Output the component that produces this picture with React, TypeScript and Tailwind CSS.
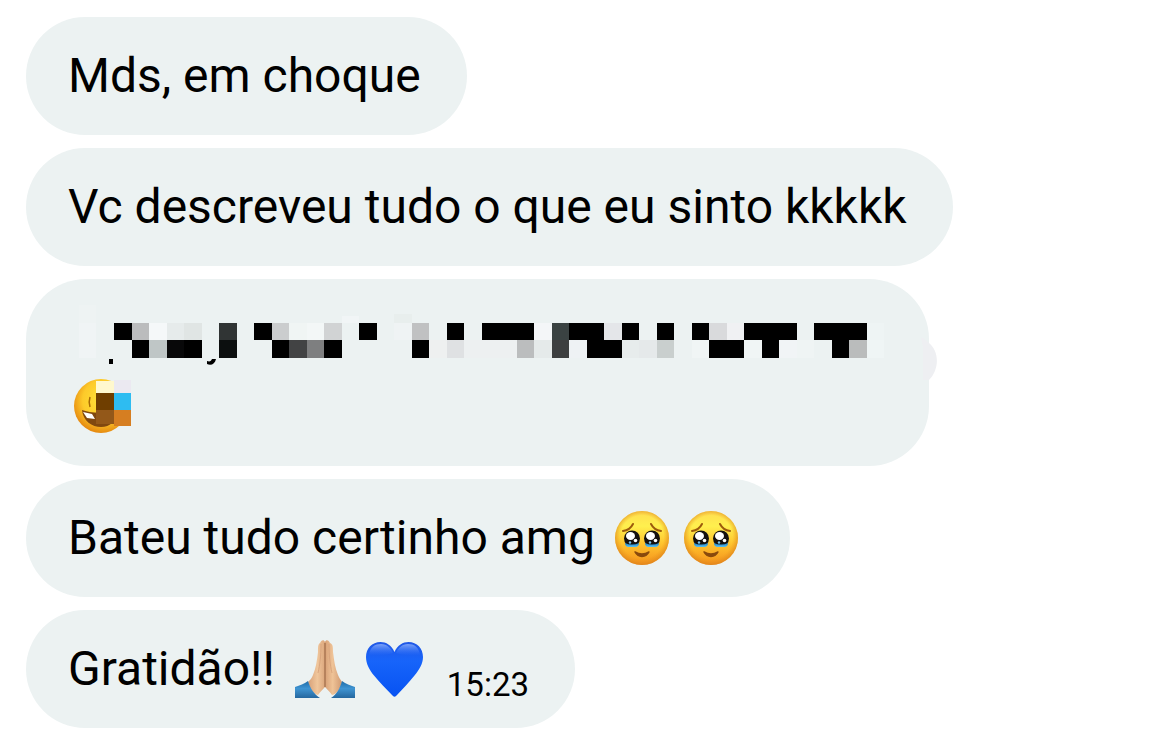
import type { ReactNode } from 'react';

interface BubbleProps {
    children: ReactNode;
    className?: string;
}

// [column, span, colour] for each row of censor blocks
type Block = [number, number, string];

const TOP_ROW: Block[] = [
    [2, 1, '#000'], [3, 1, '#bbbcbd'], [4, 1, '#f5f8f9'], [5, 1, '#e6ebeb'], [6, 1, '#e0e5e4'],
    [8, 1, '#303434'], [10, 1, '#000'], [11, 1, '#cbcdce'], [12, 1, '#f0f5f4'], [13, 1, '#f3f7f7'],
    [14, 1, '#d1d3d4'], [16, 1, '#000'], [18, 1, '#eff3f4'], [19, 1, '#c0c1c2'], [21, 1, '#000'],
    [23, 3, '#000'], [26, 1, '#f4f6f8'], [27, 1, '#3a4242'], [28, 2, '#000'], [30, 1, '#e4e6e9'],
    [31, 1, '#000'], [33, 1, '#000'], [35, 1, '#000'], [36, 1, '#d9dadc'], [37, 1, '#f0f1f3'],
    [38, 3, '#000'], [42, 3, '#000'], [45, 1, '#eef4f4'],
];

const BOTTOM_ROW: Block[] = [
    [3, 1, '#000'], [4, 1, '#bfc6c6'], [5, 1, '#080809'], [6, 1, '#000'], [8, 1, '#0c0f0f'],
    [11, 1, '#000'], [12, 1, '#424344'], [13, 1, '#7e7f80'], [14, 1, '#000'], [19, 1, '#000'],
    [20, 1, '#eef0f0'], [21, 1, '#dfe1e3'], [22, 3, '#edf0f1'], [25, 1, '#bbbdbe'], [26, 1, '#e5eaea'],
    [27, 1, '#3d3f40'], [28, 1, '#eef2f4'], [29, 2, '#000'], [31, 1, '#e7ecec'], [32, 1, '#e5e9ea'],
    [33, 1, '#c9cfce'], [35, 1, '#f0f5f5'], [36, 2, '#000'], [38, 1, '#f0f5f5'], [39, 1, '#000'],
    [40, 1, '#f1f4f6'], [41, 1, '#eff4f4'], [43, 1, '#000'], [44, 1, '#babcbc'], [45, 1, '#eff5f5'],
];

function Bubble({ children, className = '' }: BubbleProps) {
    return (
        <li className={`relative w-fit rounded-[60px] bg-[#ecf2f2] py-6 pl-[42px] ${className}`}>
            {children}
        </li>
    );
}

function CensoredLine() {
    const drawRow = (row: Block[], y: number, height: number) =>
        row.map(([col, span, fill]) => {
            const left = Math.round(11 + col * 17.5);
            const right = Math.round(11 + (col + span) * 17.5);
            return <rect key={`${y}-${col}`} x={left} y={y} width={right - left} height={height} fill={fill} />;
        });

    return (
        <svg viewBox="0 0 820 69" className="block h-[69px] w-[820px]" shapeRendering="crispEdges" aria-hidden="true">
            <rect x="11" y="2" width="17" height="18" fill="#eef3f3" />
            <rect x="11" y="20" width="17" height="35" fill="#f0f4f5" />
            <rect x="274" y="13" width="17" height="7" fill="#f1f5f6" />
            <rect x="326" y="11" width="18" height="9" fill="#e8eeed" />
            {drawRow(TOP_ROW, 20, 17)}
            {drawRow(BOTTOM_ROW, 37, 18)}
            {/* descenders peeking out below the blocks */}
            <rect x="41" y="56" width="4" height="5" fill="#000" />
            <path d="M139 58c3 1 4 0 5-2h4c-1 5-5 7-9 5z" fill="#000" shapeRendering="auto" />
        </svg>
    );
}

function CensoredFace() {
    return (
        <svg viewBox="0 0 60 70" className="ml-1 block h-[70px] w-[60px]" aria-hidden="true">
            <defs>
                <radialGradient id="laugh" cx="0.55" cy="0.4" r="0.6">
                    <stop offset="0" stopColor="#ffe53b" />
                    <stop offset="0.65" stopColor="#fdca2a" />
                    <stop offset="1" stopColor="#e68a10" />
                </radialGradient>
            </defs>
            <circle cx="29" cy="34" r="27" fill="url(#laugh)" />
            <path d="M18 25c-1 3-1 7 0 10" fill="none" stroke="#a86a05" strokeWidth="1.5" />
            <path d="M10 38c8 3 22 4 36 0-1 11-8 17-17 17S11 49 10 38z" fill="#80480f" />
            <path d="M11 40l9 2 3 5-8-1z" fill="#fff" />
            <g shapeRendering="crispEdges">
                <rect x="24" y="9" width="18" height="12" fill="#fff8ce" />
                <rect x="42" y="8" width="17" height="13" fill="#ebe9f1" />
                <rect x="24" y="21" width="18" height="17" fill="#6f3e00" />
                <rect x="42" y="21" width="17" height="17" fill="#2ebcf1" />
                <rect x="24" y="38" width="18" height="14" fill="#935819" />
                <rect x="42" y="38" width="17" height="16" fill="#d67e21" />
            </g>
        </svg>
    );
}

function PleadingFace() {
    return (
        <svg viewBox="0 0 54 54" className="size-[54px] shrink-0" role="img" aria-label="🥹">
            <defs>
                <linearGradient id="faceFill" x1="0" y1="0" x2="0" y2="1">
                    <stop offset="0" stopColor="#ffdc50" />
                    <stop offset="0.28" stopColor="#fff04e" />
                    <stop offset="0.6" stopColor="#ffc42e" />
                    <stop offset="1" stopColor="#f5911c" />
                </linearGradient>
                <radialGradient id="faceEdge" cx="0.5" cy="0.48" r="0.53">
                    <stop offset="0.75" stopColor="#e8951c" stopOpacity="0" />
                    <stop offset="1" stopColor="#d97f1c" stopOpacity="0.8" />
                </radialGradient>
                <linearGradient id="tear" x1="0" y1="0" x2="0" y2="1">
                    <stop offset="0" stopColor="#1678bd" />
                    <stop offset="1" stopColor="#5cc2f2" />
                </linearGradient>
            </defs>
            <circle cx="27" cy="27" r="27" fill="url(#faceFill)" />
            <circle cx="27" cy="27" r="27" fill="url(#faceEdge)" />
            <path d="M8 20c4-.5 8-3 10-7" fill="none" stroke="#9c5a0c" strokeWidth="2" strokeLinecap="round" />
            <path d="M46 20c-4-.5-8-3-10-7" fill="none" stroke="#9c5a0c" strokeWidth="2" strokeLinecap="round" />
            {[17, 37].map((cx) => (
                <g key={cx}>
                    <circle cx={cx} cy="27.500" r="8" fill="#15110f" />
                    <path d={`M${cx - 7} 32q7 3 14 0q0 3.500-3 4h-8q-3-.5-3-4z`} fill="url(#tear)" />
                    <ellipse cx={cx - 1.5} cy="25" rx="4.500" ry="4" fill="#fff" />
                    <circle cx={cx + 3.5} cy="29.500" r="1.800" fill="#fff" />
                    <circle cx={cx - 2} cy="31.500" r="1.200" fill="#7fc4ea" />
                </g>
            ))}
            <path d="M20 41q7 4 14 0-2.500 4.500-7 4.500T20 41z" fill="#8a4a0d" stroke="#8a4a0d" strokeWidth="1.500" strokeLinejoin="round" />
        </svg>
    );
}

function FoldedHands() {
    return (
        <svg viewBox="0 0 60 58" className="h-[58px] w-[60px] shrink-0" role="img" aria-label="🙏🏼">
            <defs>
                <linearGradient id="skinLeft" x1="0" x2="1">
                    <stop offset="0" stopColor="#d7a078" />
                    <stop offset="0.55" stopColor="#f0c69b" />
                    <stop offset="1" stopColor="#dba67c" />
                </linearGradient>
                <linearGradient id="skinRight" x1="1" x2="0">
                    <stop offset="0" stopColor="#d09971" />
                    <stop offset="0.55" stopColor="#efc397" />
                    <stop offset="1" stopColor="#d8a177" />
                </linearGradient>
                <linearGradient id="sleeve" x1="0" y1="0" x2="0" y2="1">
                    <stop offset="0" stopColor="#1f6ca8" />
                    <stop offset="0.45" stopColor="#3f94d2" />
                    <stop offset="1" stopColor="#25679e" />
                </linearGradient>
            </defs>
            <path d="M30 2c-1-3-4-2-5 1-2 1-2 4-2 9-1 8-2 16-5 23-1 3-3 5-5 7 1 6 6 12 10 13 2-3 5-6 7-8z" fill="url(#skinLeft)" />
            <path d="M30 2c1-3 4-2 5 1 3 1 3 4 3 9 1 8 2 16 5 23 1 3 3 5 4 7-1 6-5 12-10 13-2-3-5-6-7-8z" fill="url(#skinRight)" />
            <path d="M30 3v44" stroke="#9f6c49" strokeWidth="1.200" />
            <path d="M26 4c0 12-1 20-3 29M34 4c0 12 1 20 3 29" fill="none" stroke="#d5a078" strokeWidth="0.8" />
            <path d="M0 47c5-2 9-3 13-6 2 7 6 13 12 17H0z" fill="url(#sleeve)" />
            <path d="M60 47c-5-2-9-3-13-6-2 7-5 13-11 17h24z" fill="url(#sleeve)" />
        </svg>
    );
}

function BlueHeart() {
    return (
        <svg viewBox="0 0 57 55" className="h-[55px] w-[57px] shrink-0" role="img" aria-label="💙">
            <defs>
                <linearGradient id="heartFill" x1="0" y1="0" x2="0" y2="1">
                    <stop offset="0" stopColor="#2158e6" />
                    <stop offset="0.35" stopColor="#1764fa" />
                    <stop offset="1" stopColor="#0752f2" />
                </linearGradient>
                <linearGradient id="heartShine" x1="0" y1="0" x2="0" y2="1">
                    <stop offset="0" stopColor="#a4c1ff" stopOpacity="0.7" />
                    <stop offset="1" stopColor="#4b87ff" stopOpacity="0" />
                </linearGradient>
            </defs>
            <path
                d="M28.500 10C25.500 3 20 0 14.500 0 6 0 0 6.500 0 15c0 7 3.500 13 8 18.500 5.500 7 12 13 18 19.500q2.500 3.500 5 0c6-6.500 12-12.500 17.500-19.500C53 28 57 22 57 15 57 6.500 51 0 42.500 0 37 0 31.500 3 28.500 10z"
                fill="url(#heartFill)"
            />
            <path d="M3 13C4 5 9 2 15 2c6 0 10 4 12 9-5 2-18 3-24 2zM54 13C53 5 48 2 42 2c-6 0-10 4-12 9 5 2 18 3 24 2z" fill="url(#heartShine)" />
        </svg>
    );
}

export default function App() {
    return (
        <main className="min-h-screen bg-white pt-[17px] pb-6 pl-[26px] font-['Roboto',sans-serif] text-[48px] leading-[70px] text-black">
            <ul className="flex flex-col gap-[13px]">
                <Bubble className="pr-[46px]">Mds, em choque</Bubble>
                <Bubble className="pr-[46px]">Vc descreveu tudo o que eu sinto kkkkk</Bubble>

                <Bubble className="pr-[41px]">
                    {/* edge of the censor brush, pokes out of the bubble */}
                    <svg viewBox="0 0 32 46" className="absolute top-[58px] -right-2 h-[46px] w-8" aria-hidden="true">
                        <path d="M16 1c2-1 4 2 8 5 11 9 10 27 0 37H18V10z" fill="#eeeff2" />
                    </svg>
                    <CensoredLine />
                    <CensoredFace />
                </Bubble>

                <Bubble className="flex items-center pr-[52px]">
                    <span className="mr-5">Bateu tudo certinho amg</span>
                    <span className="flex gap-[15px]">
                        <PleadingFace />
                        <PleadingFace />
                    </span>
                </Bubble>

                <Bubble className="flex items-center pr-[46px]">
                    <span className="mr-5">Gratidão!!</span>
                    <span className="flex items-center gap-[11px]">
                        <FoldedHands />
                        <BlueHeart />
                    </span>
                    <time className="mt-8 ml-6 text-[33px] leading-[38px]">15:23</time>
                </Bubble>
            </ul>
        </main>
    );
}
